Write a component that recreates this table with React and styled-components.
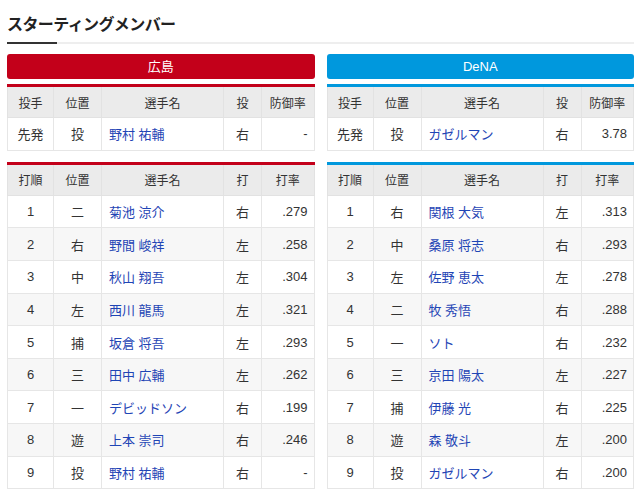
import React from 'react';
import styled, { createGlobalStyle } from 'styled-components';

const GlobalStyle = createGlobalStyle`
  body {
    margin: 0;
    background: #fff;
    font-family: "Liberation Sans", "Noto Sans CJK JP", sans-serif;
    color: #333;
  }
`;

const Page = styled.div`
  padding: 0 6px 0 7px;
`;

const TitleBar = styled.div`
  border-bottom: 2px solid #eeeeee;
  padding-top: 14px;
`;

const Title = styled.h2`
  display: inline-block;
  margin: 0 0 -2px;
  padding: 0 0 8px;
  font-size: 16px;
  line-height: 22px;
  letter-spacing: -0.6px;
  font-weight: bold;
  color: #222;
  position: relative;

  &::after {
    content: '';
    position: absolute;
    left: 0;
    bottom: 0;
    width: 50px;
    height: 2px;
    background: #333;
  }
`;

const Columns = styled.div`
  display: grid;
  grid-template-columns: 1fr 1fr;
  column-gap: 12px;
  margin-top: 10px;
`;

const Column = styled.div`
  display: flex;
  flex-direction: column;
`;

const TeamName = styled.div`
  height: 25px;
  line-height: 25px;
  border-radius: 3px;
  background: ${p => p.$color};
  color: #fff;
  text-align: center;
  font-size: 13px;
`;

const Table = styled.table`
  width: 100%;
  border-collapse: collapse;
  table-layout: fixed;
  margin-top: ${p => p.$gap}px;
  border-top: 3px solid ${p => p.$color};
  font-size: 13px;
`;

const Th = styled.th`
  height: 30px;
  padding: 0;
  background: #ebebeb;
  border: 1px solid #e2e2e2;
  border-top: none;
  font-weight: normal;
  font-size: 12px;
  color: #333;
  text-align: center;
`;

const Row = styled.tr`
  background: ${p => (p.$alt ? '#f7f7f7' : '#fff')};
`;

const Td = styled.td`
  height: 31.65px;
  padding: 0 ${p => (p.$align === 'right' ? 6 : 7)}px 0 7px;
  border: 1px solid #e6e6e6;
  text-align: ${p => p.$align || 'center'};
  color: #333;
  white-space: nowrap;
`;

const Name = styled.a`
  color: #1f45b5;
  text-decoration: none;
`;

const widths = ['46px', '48px', '122px', '38px', 'auto'];

const teams = [
  {
    name: '広島',
    color: '#c3001a',
    pitcher: ['先発', '投', '野村 祐輔', '右', '-'],
    batters: [
      ['1', '二', '菊池 涼介', '右', '.279'],
      ['2', '右', '野間 峻祥', '左', '.258'],
      ['3', '中', '秋山 翔吾', '左', '.304'],
      ['4', '左', '西川 龍馬', '左', '.321'],
      ['5', '捕', '坂倉 将吾', '左', '.293'],
      ['6', '三', '田中 広輔', '左', '.262'],
      ['7', '一', 'デビッドソン', '右', '.199'],
      ['8', '遊', '上本 崇司', '右', '.246'],
      ['9', '投', '野村 祐輔', '右', '-'],
    ],
  },
  {
    name: 'DeNA',
    color: '#0098dd',
    pitcher: ['先発', '投', 'ガゼルマン', '右', '3.78'],
    batters: [
      ['1', '右', '関根 大気', '左', '.313'],
      ['2', '中', '桑原 将志', '右', '.293'],
      ['3', '左', '佐野 恵太', '左', '.278'],
      ['4', '二', '牧 秀悟', '右', '.288'],
      ['5', '一', 'ソト', '右', '.232'],
      ['6', '三', '京田 陽太', '左', '.227'],
      ['7', '捕', '伊藤 光', '右', '.225'],
      ['8', '遊', '森 敬斗', '左', '.200'],
      ['9', '投', 'ガゼルマン', '右', '.200'],
    ],
  },
];

function Lineup({ color, gap, head, rows }) {
  return (
    <Table $color={color} $gap={gap}>
      <colgroup>
        {widths.map((w, i) => <col key={i} style={{ width: w }} />)}
      </colgroup>
      <thead>
        <tr>
          {head.map(h => <Th key={h}>{h}</Th>)}
        </tr>
      </thead>
      <tbody>
        {rows.map((r, i) => (
          <Row key={i} $alt={i % 2 === 1}>
            <Td>{r[0]}</Td>
            <Td>{r[1]}</Td>
            <Td $align="left"><Name href="#">{r[2]}</Name></Td>
            <Td>{r[3]}</Td>
            <Td $align="right">{r[4]}</Td>
          </Row>
        ))}
      </tbody>
    </Table>
  );
}

export default function App() {
  return (
    <Page>
      <GlobalStyle />
      <TitleBar>
        <Title>スターティングメンバー</Title>
      </TitleBar>
      <Columns>
        {teams.map(t => (
          <Column key={t.name}>
            <TeamName $color={t.color}>{t.name}</TeamName>
            <Lineup
              color={t.color}
              gap={5}
              head={['投手', '位置', '選手名', '投', '防御率']}
              rows={[t.pitcher]}
            />
            <Lineup
              color={t.color}
              gap={11}
              head={['打順', '位置', '選手名', '打', '打率']}
              rows={t.batters}
            />
          </Column>
        ))}
      </Columns>
    </Page>
  );
}
